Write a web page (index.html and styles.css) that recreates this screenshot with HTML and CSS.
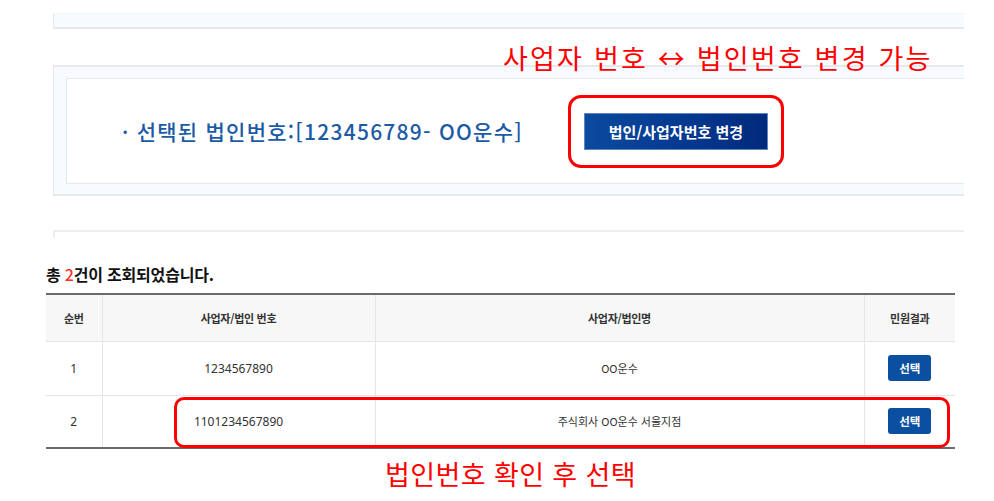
FILE: index.html
```html
<!DOCTYPE html>
<html lang="ko">
<head>
<meta charset="utf-8">
<title>법인번호 선택</title>
<link rel="stylesheet" href="styles.css">
</head>
<body>
<div class="page">
  <div class="panel">
    <div class="box box-top"></div>
    <div class="box box-select">
      <div class="select-inner">
        <p class="selected">· 선택된 법인번호:[123456789- OO운수]</p>
        <button class="btn-change" type="button">법인/사업자번호 변경</button>
      </div>
    </div>
    <div class="box-stub"></div>
  </div>

  <h2 class="count">총 <em>2</em>건이 조회되었습니다.</h2>

  <table class="result">
    <colgroup>
      <col class="c1"><col class="c2"><col class="c3"><col class="c4">
    </colgroup>
    <thead>
      <tr><th>순번</th><th>사업자/법인 번호</th><th>사업자/법인명</th><th>민원결과</th></tr>
    </thead>
    <tbody>
      <tr class="row-first">
        <td class="num">1</td>
        <td class="num">1234567890</td>
        <td>OO운수</td>
        <td><button class="btn-pick" type="button">선택</button></td>
      </tr>
      <tr>
        <td class="num">2</td>
        <td class="num">1101234567890</td>
        <td>주식회사 OO운수 서울지점</td>
        <td><button class="btn-pick" type="button">선택</button></td>
      </tr>
    </tbody>
  </table>

  <div class="note note-top">사업자 번호 ↔ 법인번호 변경 가능</div>
  <div class="mark mark-btn"></div>
  <div class="mark mark-row"></div>
  <div class="note note-bottom">법인번호 확인 후 선택</div>
</div>
</body>
</html>
```

FILE: styles.css
```css
* { box-sizing: border-box; }
html, body { margin: 0; padding: 0; background: #ffffff; }
body { font-family: "Noto Sans CJK KR", "Noto Sans", sans-serif; color: #333; }

.page {
  position: relative;
  width: 994px;
  height: 501px;
  overflow: hidden;
  padding-top: 13px;
}

.panel {
  margin-left: 53px;
  width: 911px;
  overflow: hidden;
}

.box {
  width: 960px;
  background: #f7faff;
  border: 1px solid #e6e8eb;
  border-bottom-width: 2px;
}

.box-top { height: 16px; border-top-color: #f3f5f8; }

.box-select {
  margin-top: 36px;
  height: 131px;
  padding: 11px 12px 11px 12px;
  border-top-width: 2px;
}

.select-inner {
  height: 106px;
  background: #ffffff;
  border: 1px solid #e6e8eb;
  border-right: none;
  display: flex;
  align-items: center;
  padding-left: 55px;
}

.selected {
  margin: 0;
  font-size: 21px;
  font-weight: 500;
  color: #1d5aa6;
  letter-spacing: 1.25px;
  white-space: nowrap;
}

.btn-change {
  margin-left: 61px;
  width: 184px;
  height: 37px;
  border: 1px solid #5f86c0;
  background: linear-gradient(90deg, #0a4a9f 0%, #04378e 60%, #012a7c 100%);
  color: #fff;
  font-family: inherit;
  font-size: 15px;
  font-weight: 700;
  padding: 0;
}

.box-stub {
  margin-top: 34px;
  height: 8px;
  border-top: 2px solid #eceef0;
  border-left: 2px solid #eceef0;
}

.count {
  margin: 25px 0 0 46px;
  font-size: 16px;
  font-weight: 700;
  color: #111;
  letter-spacing: -0.2px;
  line-height: 22px;
}
.count em { font-style: normal; color: #ff2a2a; font-weight: 500; }

.result {
  margin: 8px 0 0 46px;
  width: 909px;
  border-collapse: collapse;
  table-layout: fixed;
  border-top: 2px solid #6b6b6b;
  border-bottom: 2px solid #6b6b6b;
}
.c1 { width: 56px; }
.c2 { width: 273px; }
.c3 { width: 489px; }
.c4 { width: 91px; }

.result th {
  height: 47px;
  background: #f7f7f7;
  font-size: 11px;
  font-weight: 700;
  color: #333;
  border-left: 1px solid #e5e5e5;
  border-bottom: 1px solid #e5e5e5;
  letter-spacing: -0.3px;
}
.result td {
  height: 53px;
  text-align: center;
  font-size: 11px;
  color: #333;
  border-left: 1px solid #e5e5e5;
  border-bottom: 1px solid #e5e5e5;
  padding: 0;
}
.result .row-first td { height: 54px; }
.result th:first-child, .result td:first-child { border-left: none; }
.result td.num { font-family: "Noto Sans", sans-serif; font-size: 12px; }

.btn-pick {
  width: 43px;
  height: 26px;
  border: none;
  border-radius: 3px;
  background: #0b4fa0;
  color: #fff;
  font-family: inherit;
  font-size: 11.5px;
  font-weight: 700;
  padding: 0;
  vertical-align: middle;
}

.note {
  position: absolute;
  color: #ff0000;
  font-size: 27px;
  line-height: 32px;
  white-space: nowrap;
  font-weight: 400;
}
.note-top { left: 503px; top: 42px; letter-spacing: 2.2px; }
.note-bottom { left: 385px; top: 458px; letter-spacing: 0.4px; }

.mark {
  position: absolute;
  border: 3px solid #ff0000;
}
.mark-btn { left: 568px; top: 95px; width: 216px; height: 73px; border-radius: 13px; }
.mark-row { left: 174px; top: 397px; width: 776px; height: 51px; border-radius: 10px; }
```
